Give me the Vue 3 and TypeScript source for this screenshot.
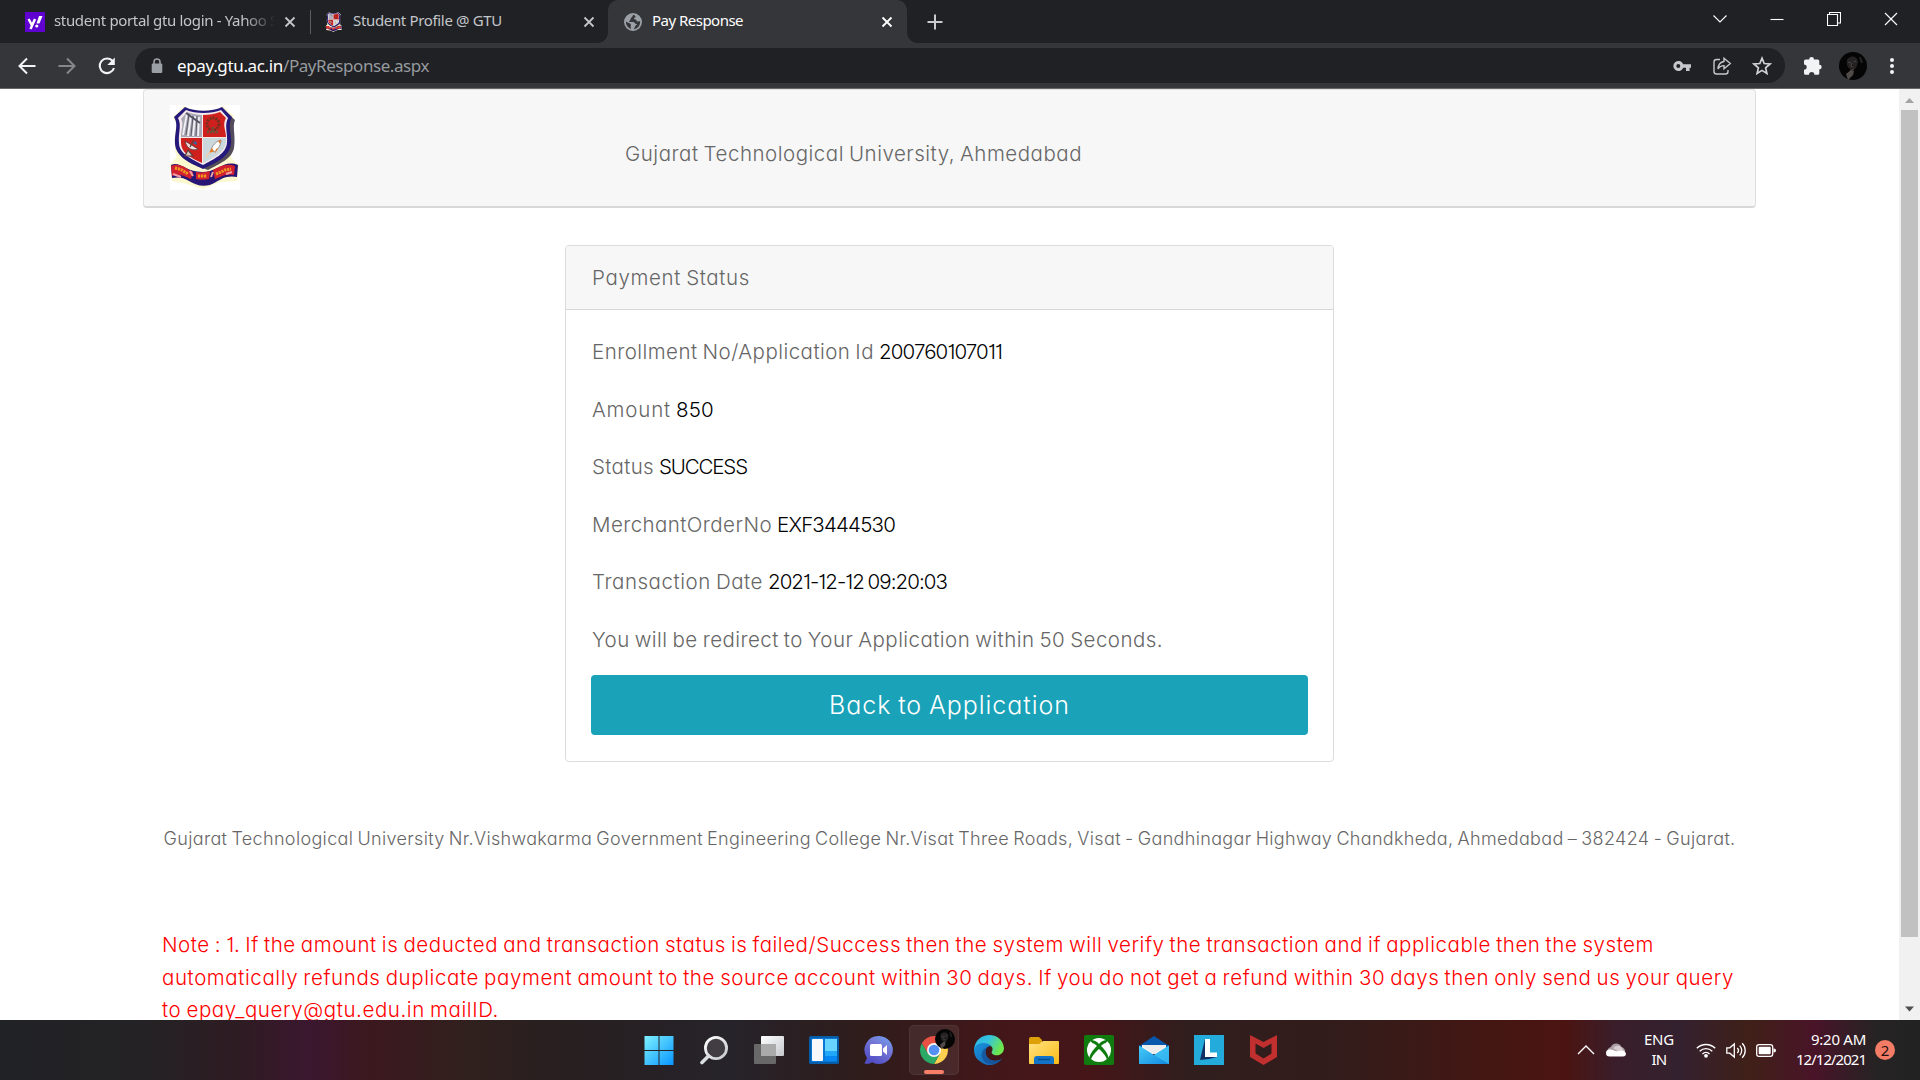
<script setup lang="ts">
interface StatusRow {
  label: string
  value: string
  labelWidth: number
  valueWidth: number
}

interface NoteLine {
  text: string
  width: number
}

const rows: StatusRow[] = [
  { label: 'Enrollment No/Application Id', value: '200760107011', labelWidth: 282, valueWidth: 123 },
  { label: 'Amount', value: '850', labelWidth: 79, valueWidth: 38 },
  { label: 'Status', value: 'SUCCESS', labelWidth: 62, valueWidth: 88 },
  { label: 'MerchantOrderNo', value: 'EXF3444530', labelWidth: 180, valueWidth: 118 },
  { label: 'Transaction Date', value: '2021-12-12 09:20:03', labelWidth: 171, valueWidth: 179 },
]

const notes: NoteLine[] = [
  { text: 'Note : 1. If the amount is deducted and transaction status is failed/Success then the system will verify the transaction and if applicable then the system', width: 1492 },
  { text: 'automatically refunds duplicate payment amount to the source account within 30 days. If you do not get a refund within 30 days then only send us your query', width: 1572 },
  { text: 'to epay_query@gtu.edu.in mailID.', width: 337 },
]

// Tracks a line of text so that it fills the given width.
const vFit = {
  mounted(el: HTMLElement, binding: { value: number }) {
    const count = (el.textContent ?? '').length
    const natural = el.getBoundingClientRect().width
    if (count > 0) el.style.letterSpacing = `${(binding.value - natural) / count}px`
  },
}
</script>

<template>
  <div class="screen">
    <svg class="defs" width="0" height="0">
      <defs>
        <symbol id="crest" viewBox="0 0 70 85">
          <path d="M14 1C24 7 43 7 53 1L64 11C59 20 63 28 62 39L61 53 69 60 67 76 50 77 33 84 17 79 2 76 0 59 7 52C3 42 5 25 7 20L3 12Z" fill="#fbf7cf" />
          <path d="M17 5C28 10 43 9 54 5L65 15C62 22 66 30 64 43 62 54 49 59 38 65 24 60 8 54 7 41 5 29 11 22 6 15Z" fill="#2b2037" opacity=".8" />
          <path d="M15 2C25 7 42 7 52 2L62 12C57 21 62 28 61 39 60 52 45 58 33 64 20 58 6 52 5 39 4 28 9 20 4 12Z" fill="#251a7c" />
          <path d="M16 5C25 9 42 9 51 5L58 13C54 21 58 28 57 38 56 49 44 54 33 60 22 54 9 49 9 38 8 28 12 20 8 13Z" fill="#f6e9ec" />
          <path d="M17 7C22 9 28 10 32 10V32H11C11 24 14 19 11 14Z" fill="#a9a8b5" />
          <path d="M33 10C39 10 45 9 50 7L56 13C52 20 56 25 56 32H33ZM11 33H32V58C20 53 11 47 11 38Z" fill="#cf201e" />
          <path d="M33 33H56C57 46 47 51 33 58Z" fill="#cbd9dd" />
          <path d="M17 8 13 30M21 10 18 31M25 11 23 31M29 12 28 31" stroke="#f1f0f4" stroke-width="1.8" />
          <path d="M19 9 16 30M23 11 21 31M27 11 26 31" stroke="#5c5966" stroke-width="1" />
          <path d="M16 8 30 18" stroke="#535062" stroke-width="2" />
          <circle cx="43" cy="19" r="6" fill="none" stroke="#77301f" stroke-width="3" stroke-dasharray="2 1" />
          <path d="M37 27h12M43 22v6" stroke="#70513c" stroke-width="2.5" stroke-dasharray="2 1" />
          <path d="M15 36C17 45 24 46 28 44Z" fill="#f2dfdc" stroke="#53333b" stroke-width=".8" />
          <path d="M20 42 24 35M18 45 15 51h8z" fill="#dec7bb" stroke="#5f3d3d" stroke-width="1.2" />
          <path d="M23 38l3-2 1 4z" fill="#236fae" />
          <path d="M51 35C46 36 42 41 41 45L44 47C49 44 51 39 51 35Z" fill="#fff" stroke="#7b6562" stroke-width=".7" />
          <path d="M51 35l-3 1 2 3zM42 43l-4 6 6-3M46 44l-1 5 3-6" fill="#e87b24" />
          <path d="M40 47l-4 5" stroke="#f1c9a8" stroke-width="1.5" />
          <path d="M1 60C10 56 16 67 32 67S54 54 68 60L67 72C57 70 51 74 46 77 35 84 26 80 19 76 13 72 8 72 2 73Z" fill="#281576" />
          <path d="M1 61C7 58 14 61 19 65L23 67 21 74C14 71 8 68 2 71ZM26 67C31 68 36 67 40 66L39 74C34 75 30 75 26 74ZM43 65C50 61 57 58 65 61L64 70C57 68 50 72 45 74Z" fill="#d3202e" />
          <path d="M5 63l4 1 3 1 6 4M28 71h9M46 69l5-2 4-2 6-1" fill="none" stroke="#ee9b22" stroke-width="3" stroke-dasharray="2.2 .8" />
          <path d="M3 69l8 3M62 67l-6 2M20 66l3 5M43 67l-2 5" stroke="#f3a0a4" stroke-width="2" />
        </symbol>
        <symbol id="close" viewBox="0 0 12 12">
          <path d="M1.5 1.5 10.5 10.5M10.5 1.5 1.5 10.5" stroke="currentColor" stroke-width="1.8" />
        </symbol>
        <symbol id="face" viewBox="0 0 28 28">
          <circle cx="14" cy="14" r="14" fill="#050505" />
          <path d="M8 8c2-5 10-5 11 2l-2 6-4 2C9 17 7 13 8 8Z" fill="#242222" />
          <path d="M9 10l3 1M15 10l2-1M13 11l-1 3 2 1M11 19l4-2" stroke="#484343" stroke-width="1.2" />
          <path d="M7 22l5-4 3 1-1 4-5 5Z" fill="#504b49" />
          <path d="M21 5l2 6" stroke="#252525" stroke-width="2" />
        </symbol>
        <linearGradient id="win" gradientUnits="userSpaceOnUse" x1="1" y1="1" x2="30" y2="30"><stop stop-color="#7df0ff" /><stop offset="1" stop-color="#0795ff" /></linearGradient>
        <linearGradient id="glass" x1="0" y1="0" x2="1" y2="1"><stop stop-color="#fff" /><stop offset="1" stop-color="#c5c8cc" /></linearGradient>
        <linearGradient id="chat" x1="1" y1="0" x2=".4" y2="1"><stop stop-color="#6daaf5" /><stop offset=".45" stop-color="#7577d5" /><stop offset="1" stop-color="#524fc5" /></linearGradient>
        <linearGradient id="edgeTop" x1="0" y1="0" x2="1" y2=".4"><stop stop-color="#2ab2ea" /><stop offset=".5" stop-color="#35c4dd" /><stop offset="1" stop-color="#6de74b" /></linearGradient>
        <linearGradient id="edgeLow" x1="0" y1="0" x2="1" y2="1"><stop stop-color="#1a93dd" /><stop offset="1" stop-color="#135aa9" /></linearGradient>
        <linearGradient id="folder" x1="0" y1="0" x2="1" y2="1"><stop stop-color="#ffe381" /><stop offset="1" stop-color="#fcbb17" /></linearGradient>
        <linearGradient id="mail" x1="0" y1="0" x2="1" y2="1"><stop stop-color="#45cdf8" /><stop offset="1" stop-color="#1487df" /></linearGradient>
      </defs>
    </svg>

    <header class="tabs">
      <div class="tab first">
        <svg class="fav" viewBox="0 0 20 20">
          <rect width="20" height="20" fill="#5f01d1" />
          <path d="M3.6 7 6.8 13M10 7 5.5 17" stroke="#fff" stroke-width="2.5" />
          <path d="M14 4h3.5L14.5 11.5h-3Z" fill="#fff" /><circle cx="11.8" cy="14" r="1.6" fill="#fff" />
        </svg>
        <div class="title fade"><span v-fit="224">student portal gtu login - Yahoo S</span></div>
        <svg class="x"><use href="#close" /></svg>
      </div>
      <div class="tab second">
        <svg class="fav"><use href="#crest" /></svg>
        <div class="title"><span v-fit="149">Student Profile @ GTU</span></div>
        <svg class="x"><use href="#close" /></svg>
      </div>
      <div class="tab active">
        <svg class="globe" viewBox="0 0 18 18">
          <circle cx="9" cy="9" r="9" fill="#9aa0a6" />
          <path d="M9.5 1.8C7.8 3 8.8 4.2 7.5 4.6 6 5.1 7.4 6.4 6.1 6.9L5 9H9c2 0 1.8 2 3.2 2 1.2 0 1 .9-.2 1.3-1.3.4-1 3-2.4 4A7.2 7.2 0 0 0 16.2 8.5C14.5 8 14.9 9 13.2 8.3 12 7.7 12.4 6.2 10.8 6.2 9.3 6.1 9.9 4.9 11 4.5 12.1 4 11.7 2.5 9.5 1.8ZM1.9 8.5C3.2 10 5.4 9.5 6.6 11 7.7 12.5 5.9 13 7.3 16A7.2 7.2 0 0 1 1.9 8.5Z" fill="#35363a" />
        </svg>
        <div class="title"><span v-fit="91">Pay Response</span></div>
        <svg class="x"><use href="#close" /></svg>
      </div>
      <svg class="plus" viewBox="0 0 16 16"><path d="M8 .5v15M.5 8h15" stroke="#c8cbcf" stroke-width="2" /></svg>
      <div class="controls">
        <svg viewBox="0 0 14 14"><path d="M.5 3.5 7 10 13.5 3.5" /></svg>
        <svg viewBox="0 0 14 14"><path d="M.5 7.5h13" /></svg>
        <svg viewBox="0 0 14 14"><path d="M.5 2.5h10v11h-10ZM2.5 2.5v-2h11v10.5h-3" /></svg>
        <svg viewBox="0 0 14 14"><path d="M1 1 13 13M13 1 1 13" /></svg>
      </div>
    </header>

    <nav class="toolbar">
      <svg class="nav" viewBox="0 0 20 20"><path d="M18.5 10H3M10 2.5 2.5 10 10 17.5" stroke="#f1f3f4" stroke-width="2" fill="none" /></svg>
      <svg class="nav" viewBox="0 0 20 20"><path d="M1.5 10H17M10 2.5 17.5 10 10 17.5" stroke="#85878b" stroke-width="2" fill="none" /></svg>
      <svg class="nav" viewBox="0 0 20 20"><path d="M15.7 5.2A7.3 7.3 0 1 0 17 12" stroke="#f1f3f4" stroke-width="2.1" fill="none" /><path d="M17.8 1.5V9H10.3Z" fill="#f1f3f4" /></svg>
      <div class="omnibox">
        <svg class="lock" viewBox="0 0 12 16"><path d="M3 7V4a3 3 0 0 1 6 0v3" fill="none" stroke="#9aa0a6" stroke-width="1.6" /><rect x=".7" y="5.5" width="10.6" height="9.5" rx="1.2" fill="#9aa0a6" /></svg>
        <div class="url"><span v-fit="106" class="host">epay.gtu.ac.in</span><span v-fit="146">/PayResponse.aspx</span></div>
        <svg class="key" viewBox="0 0 20 20"><path d="M11.2 8.2A5.1 5.1 0 1 0 11.2 11.8H14V15h3.6v-3.2H19V8.2ZM6.3 12a2 2 0 1 1 0-4 2 2 0 0 1 0 4Z" fill="#c4c7cb" fill-rule="evenodd" /></svg>
        <svg class="share" viewBox="0 0 20 20"><path d="M8 3.5H4.5A2.5 2.5 0 0 0 2 6v9.5A2.5 2.5 0 0 0 4.5 18h9a2.5 2.5 0 0 0 2.5-2.5V14" /><path d="M12 2.2 18.3 7.5 12 12.8V9.6C9.5 9.6 7.5 10.5 6 13 6.3 8.5 8.5 6 12 5.5Z" /></svg>
        <svg class="star" viewBox="0 0 20 20"><path d="M10 2.2 12.2 7.5 18 8 13.6 11.8 14.9 17.4 10 14.4 5.1 17.4 6.4 11.8 2 8 7.8 7.5Z" fill="none" stroke="#d0d2d5" stroke-width="1.7" /></svg>
      </div>
      <svg class="puzzle" viewBox="0 0 20 20"><path d="M1 5a1.6 1.6 0 0 1 1.6-1.6H6.2a2.4 2.4 0 1 1 4.8 0h3.7A1.6 1.6 0 0 1 16.3 5v3.7a2.4 2.4 0 1 1 0 4.8v3.7a1.6 1.6 0 0 1-1.6 1.6h-3.3a2.7 2.7 0 0 0-5.4 0H2.6A1.6 1.6 0 0 1 1 17.2v-3.4a2.7 2.7 0 0 0 0-5.4Z" fill="#f1f3f4" /></svg>
      <svg class="avatar"><use href="#face" /></svg>
      <svg class="menu" viewBox="0 0 6 18"><circle cx="3" cy="3" r="2" /><circle cx="3" cy="9" r="2" /><circle cx="3" cy="15" r="2" /></svg>
    </nav>

    <div class="viewport">
      <main class="page">
        <section class="banner">
          <svg class="crest"><rect width="70" height="85" fill="#fff" /><use href="#crest" width="70" height="85" /></svg>
          <div class="name"><span v-fit="457">Gujarat Technological University, Ahmedabad</span></div>
        </section>
        <section class="card">
          <div class="card-head"><span v-fit="158">Payment Status</span></div>
          <div class="card-body">
            <div v-for="row in rows" :key="row.label" class="row">
              <span v-fit="row.labelWidth">{{ row.label }}</span>
              <span v-fit="row.valueWidth" class="value">{{ row.value }}</span>
            </div>
            <div class="row"><span v-fit="571">You will be redirect to Your Application within 50 Seconds.</span></div>
            <button class="back" type="button"><span v-fit="241">Back to Application</span></button>
          </div>
        </section>
        <p class="address"><span v-fit="1572">Gujarat Technological University Nr.Vishwakarma Government Engineering College Nr.Visat Three Roads, Visat - Gandhinagar Highway Chandkheda, Ahmedabad – 382424 - Gujarat.</span></p>
        <div class="notes">
          <div v-for="line in notes" :key="line.text"><span v-fit="line.width">{{ line.text }}</span></div>
        </div>
      </main>
      <aside class="scrollbar">
        <svg viewBox="0 0 21 21"><path d="M6 14 10.5 9 15 14Z" fill="#a3a3a3" /></svg>
        <div class="thumb"></div>
        <svg viewBox="0 0 21 21"><path d="M6 7.5h9L10.5 12.5Z" fill="#505050" /></svg>
      </aside>
    </div>

    <footer class="taskbar">
      <div class="apps">
        <div class="app"><svg viewBox="0 0 30 30"><path d="M.5 1h14v14h-14ZM15.5 1h14v14h-14ZM.5 16h14v14h-14ZM15.5 16h14v14h-14Z" fill="url(#win)" /></svg></div>
        <div class="app"><svg viewBox="0 0 30 30"><circle cx="17" cy="13" r="10.6" fill="#fff" fill-opacity=".12" stroke="url(#glass)" stroke-width="2.8" /><path d="M9.5 21 3 27.5" stroke="#dcdfe2" stroke-width="3.6" stroke-linecap="round" /></svg></div>
        <div class="app"><svg viewBox="0 0 30 30"><rect x="7" y="1" width="23" height="20" rx="1" fill="url(#glass)" /><rect y="9" width="22" height="20" rx="1" fill="#686868" /><path d="M7 9h15v12H7Z" fill="#aaa" /></svg></div>
        <div class="app"><svg viewBox="0 0 30 30"><rect y="1" width="30" height="28" rx="1.5" fill="#075ca8" /><rect x="2" y="3" width="26" height="24" fill="#0878d4" /><rect x="3" y="4" width="11" height="22" rx="1" fill="#f8f8fa" /><path d="M16 4h12v12H16Z" fill="#67d5ff" /><path d="M16 16h12v5H16Z" fill="#20a7fa" /><path d="M16 21h12v5H16Z" fill="#0787f2" /></svg></div>
        <div class="app"><svg viewBox="0 0 30 30"><path d="M15 1A14 14 0 1 1 8 27.2C6 29 3 29 .5 28.6L3 23A14 14 0 0 1 15 1Z" fill="url(#chat)" /><rect x="6" y="9" width="12" height="12" rx="1.5" fill="#fff" /><path d="M19 13.5 23 10v10l-4-3.5Z" fill="#fff" /></svg></div>
        <div class="app running">
          <svg viewBox="0 0 30 30"><path d="M15 8H27.12A14 14 0 0 1 15 29L21 18.5Z" fill="#ffcd42" /><path d="M2.88 8 9 18.5 15 22 21 18.5 15 29A14 14 0 0 1 2.88 8Z" fill="#1aa35c" /><path d="M15 8H27.1A14 14 0 0 0 2.88 8L9 18.5Z" fill="#e74435" /><circle cx="15" cy="15" r="7" fill="#f6f7f8" /><circle cx="15" cy="15" r="5.3" fill="#4688f1" /></svg>
          <svg class="mini"><use href="#face" /></svg>
          <i class="indicator"></i>
        </div>
        <div class="app"><svg viewBox="0 0 30 30"><path d="M0 15C1-4 28-5 30 13c0 7-8 9-11.5 6C16 16.5 20 16 18 12 13 7 3 8 0 15Z" fill="url(#edgeTop)" /><path d="M0 14C2 7 13 6 17.5 11 12 10 9 18 14 23c3 3 9 4 14 .5C23 31 13 32 7 27 2 24 0 20 0 14Z" fill="url(#edgeLow)" /><path d="M17.5 11C12 10 9 18 14 23c3 3 9 4 14 .5C24 29 18 30 13 28 5 24 6 12 17.5 11Z" fill="#174f96" opacity=".75" /></svg></div>
        <div class="app"><svg viewBox="0 0 30 30"><path d="M0 4Q0 2 2 2H10l3 3v7H0Z" fill="#dda009" /><path d="M0 9h10l4-3H29q1 0 1 1v21q0 1-1 1H1q-1 0-1-1Z" fill="url(#folder)" /><path d="M5 29v-5q0-3 3-3h14q3 0 3 3v5Z" fill="#1273c8" /><path d="M9 24.5h12" stroke="#064a89" stroke-width="1.3" /></svg></div>
        <div class="app"><svg viewBox="0 0 30 30"><rect width="30" height="30" rx="2" fill="#107c10" /><circle cx="15" cy="15" r="12" fill="#fff" /><path d="M6 5.5C9 4 13 7 15 9c2-2 6-5 9-3.5L21.5 8.2C20 8 18.5 9.6 17 11c4.5 4 7.5 9 7.5 12L23 24.5C22 21 18 16.5 15 14c-3 2.5-7 7-8 10.5L5.5 23c0-3 3-8 7.5-12C11.5 9.6 10 8 8.5 8.2Z" fill="#107c10" /></svg></div>
        <div class="app"><svg viewBox="0 0 30 30"><path d="M0 11 15 1 30 11V18H0Z" fill="#0758ac" /><path d="M3 10h24v9H3Z" fill="#f3f3f4" /><path d="M0 10.5 15 20 30 10.5V29H0Z" fill="url(#mail)" /><path d="M15 20 30 29V10.5Z" fill="#45cbf7" opacity=".6" /><path d="M3 10 15 19 27 10Z" fill="#ececec" /></svg></div>
        <div class="app"><svg viewBox="0 0 30 30"><rect width="30" height="30" fill="#23abdb" /><path d="M11 4 6 25 15 24 23 22 16 18Z" fill="#102f63" /><path d="M11 4h5v13.5h7V22H11Z" fill="#fff" /></svg></div>
        <div class="app"><svg viewBox="0 0 30 30"><path d="M1 0 14.5 7 28 0V22L14.5 30 1 22ZM6.5 8.5V18.5L14.5 23.5 22.5 18.5V8.5L14.5 13Z" fill="#c12f2f" fill-rule="evenodd" /></svg></div>
      </div>
      <div class="tray">
        <svg class="up" viewBox="0 0 18 12"><path d="M1 10 9 2 17 10" fill="none" stroke="#fff" stroke-width="1.4" /></svg>
        <svg class="cloud" viewBox="0 0 20 14"><path d="M3 11A4 4 0 0 1 4.8 4 5.8 5.8 0 0 1 15.5 4 4.8 4.8 0 0 1 19 10Z" fill="#a99ca2" /><path d="M7 5a6 6 0 0 1 8.5-.8L19 10H14Z" fill="#d7cdd0" /><path d="M3.5 13.5a3.5 3.5 0 0 1 0-7C8 6 9 9 12 8c3-1 7-1 8 2.5a3 3 0 0 1-3 3Z" fill="#fff" /></svg>
        <div class="lang"><span v-fit="30">ENG</span><span v-fit="15">IN</span></div>
        <svg class="wifi" viewBox="0 0 20 16"><path d="M.8 6.3a13 13 0 0 1 18.4 0M3.7 9.2a9 9 0 0 1 12.6 0M6.5 12a5 5 0 0 1 7 0" fill="none" stroke="#fff" stroke-width="1.4" /><circle cx="10" cy="13.8" r="1.9" fill="#fff" /></svg>
        <svg class="sound" viewBox="0 0 20 17"><path d="M.8 5.8v5.4h3L8.3 15V2L3.8 5.8ZM11.3 6a3.6 3.6 0 0 1 0 5M13.7 3.6a7 7 0 0 1 0 9.8M16.2 1.2a10.4 10.4 0 0 1 0 14.6" fill="none" stroke="#fff" stroke-width="1.3" /></svg>
        <svg class="battery" viewBox="0 0 20 13"><rect x=".7" y=".7" width="16" height="11.6" rx="2.4" fill="none" stroke="#fff" stroke-width="1.3" /><rect x="2.7" y="2.7" width="12" height="7.6" rx="1" fill="#fff" /><path d="M17.5 4.5q2.5-.2 2.5 2t-2.5 2Z" fill="#fff" /></svg>
        <div class="clock"><span v-fit="55">9:20 AM</span><span v-fit="70">12/12/2021</span></div>
        <div class="badge">2</div>
      </div>
    </footer>
  </div>
</template>

<style>
body {
  margin: 0;
  overflow: hidden;
}
</style>

<style scoped>
.screen {
  width: 1920px;
  height: 1080px;
  display: flex;
  flex-direction: column;
  overflow: hidden;
  background: #fff;
  font-family: "Noto Sans", "Open Sans", sans-serif;
  white-space: nowrap;
}
.screen * {
  box-sizing: border-box;
}
svg {
  display: block;
  flex: none;
}
.defs {
  position: absolute;
}
.tabs {
  height: 43px;
  flex: none;
  display: flex;
  align-items: center;
  background: #202124;
  color: #c3c6ca;
  font-size: 15px;
}
.tab {
  height: 43px;
  display: flex;
  align-items: center;
  position: relative;
}
.first {
  width: 310px;
  padding-left: 25px;
}
.second {
  width: 298px;
  padding-left: 14px;
}
.first::after {
  content: "";
  position: absolute;
  right: -1px;
  top: 10px;
  width: 1px;
  height: 24px;
  background: #5b5d61;
}
.active {
  width: 299px;
  padding-left: 16px;
  background: #35363a;
  border-radius: 10px 10px 0 0;
  color: #fff;
}
.active::before,
.active::after {
  content: "";
  position: absolute;
  bottom: 0;
  width: 10px;
  height: 10px;
}
.active::before {
  left: -10px;
  background: radial-gradient(circle at 0 0, transparent 9.5px, #35363a 10px);
}
.active::after {
  right: -10px;
  background: radial-gradient(circle at 100% 0, transparent 9.5px, #35363a 10px);
}
.fav {
  width: 20px;
  height: 20px;
  margin-right: 9px;
}
.globe {
  width: 18px;
  height: 18px;
  margin-right: 10px;
}
.title {
  line-height: 40px;
  height: 43px;
}
.first .title {
  width: 221px;
  overflow: hidden;
}
.second .title {
  width: 228px;
}
.active .title {
  width: 229px;
}
.fade {
  mask-image: linear-gradient(to right, #000 190px, transparent 221px);
}
.x {
  width: 12px;
  height: 12px;
  margin-left: 9px;
}
.second .x {
  margin-left: 2px;
}
.active .x {
  margin-left: 0;
}
.plus {
  width: 16px;
  height: 16px;
  margin-left: 20px;
}
.controls {
  margin-left: auto;
  display: flex;
  gap: 43px;
  padding: 0 22px 6px 0;
}
.controls svg {
  width: 14px;
  height: 14px;
  fill: none;
  stroke: #fff;
  stroke-width: 1.1;
}
.toolbar {
  height: 46px;
  flex: none;
  display: flex;
  align-items: center;
  background: #35363a;
  border-bottom: 1px solid #66676a;
  padding-left: 17px;
}
.nav {
  width: 20px;
  height: 20px;
  margin-right: 20px;
}
.omnibox {
  width: 1650px;
  height: 35px;
  border-radius: 18px;
  background: #202124;
  display: flex;
  align-items: center;
  padding: 0 13px 0 16px;
  margin-left: -2px;
}
.lock {
  width: 12px;
  height: 16px;
  margin-right: 14px;
}
.url {
  font-size: 17px;
  line-height: 33px;
  color: #969a9f;
  flex: 1;
}
.host {
  color: #fff;
}
.key,
.share,
.star {
  width: 20px;
  height: 20px;
  margin-left: 20px;
}
.share {
  fill: none;
  stroke: #c4c7cb;
  stroke-width: 1.4;
}
.puzzle {
  width: 20px;
  height: 20px;
  margin-left: 18px;
}
.avatar {
  width: 28px;
  height: 28px;
  margin-left: 16px;
}
.menu {
  width: 6px;
  height: 18px;
  margin-left: 22px;
  fill: #f1f3f4;
}
.viewport {
  height: 931px;
  flex: none;
  display: flex;
  overflow: hidden;
}
.page {
  width: 1899px;
  display: flex;
  flex-direction: column;
  align-items: center;
  font-family: Inter, "Liberation Sans", sans-serif;
  font-weight: 350;
  font-size: 20.5px;
  font-feature-settings: "cv11", "cv01", "calt" 0;
  word-spacing: -1.2px;
  color: #666;
}
.banner {
  width: 1613px;
  height: 119px;
  flex: none;
  display: flex;
  align-items: flex-start;
  background: #f7f7f7;
  border: 1px solid #dfdfdf;
  border-bottom: 2px solid #d8d8d8;
  border-radius: 4px;
  padding: 15px 0 0 26px;
}
.crest {
  width: 70px;
  height: 85px;
  margin-right: 385px;
}
.name {
  line-height: 30px;
  margin-top: 34px;
}
.card {
  width: 769px;
  height: 517px;
  flex: none;
  margin-top: 37px;
  border: 1px solid #dcdcdc;
  border-radius: 4px;
}
.card-head {
  height: 64px;
  line-height: 64px;
  padding-left: 26px;
  background: #f7f7f7;
  border-bottom: 1px solid #d8d8d8;
  border-radius: 3px 3px 0 0;
}
.card-body {
  padding: 13px 25px 0;
}
.row {
  height: 57.6px;
  line-height: 57.6px;
  display: flex;
  gap: 5px;
  padding-left: 1px;
}
.value {
  color: #000;
}
.back {
  display: block;
  width: 717px;
  height: 60px;
  margin-top: 6px;
  padding: 1px 0 0;
  border: 0;
  border-radius: 4px;
  background: #19a2b8;
  color: #fff;
  font: inherit;
  font-feature-settings: inherit;
  word-spacing: inherit;
  font-size: 25px;
  line-height: 59px;
}
.address {
  margin: 62px 0 0;
  font-size: 18px;
  line-height: 30px;
}
.notes {
  width: 1575px;
  margin-top: 75px;
  line-height: 32.5px;
  color: #f00;
}
.scrollbar {
  width: 21px;
  background: #f1f1f1;
  display: flex;
  flex-direction: column;
  align-items: center;
}
.scrollbar svg {
  width: 21px;
  height: 21px;
}
.thumb {
  width: 17px;
  height: 827px;
  margin-bottom: auto;
  background: #c1c1c1;
}
.taskbar {
  height: 60px;
  flex: none;
  display: flex;
  justify-content: space-between;
  padding-left: 631px;
  color: #fff;
  background: linear-gradient(90deg, #212226 0, #242224 150px, #301b23 250px, #3b1730 310px, #3c181e 370px, #30201e 470px, #281f20 560px, #26232a 730px, #301c1b 870px, #43171a 1000px, #451518 1090px, #301e1e 1190px, #331c1a 1350px, #431713 1480px, #4b1411 1565px, #3a1e2a 1615px, #34212f 1680px, #402018 1750px, #491428 1815px, #262324 1875px, #222 1920px);
}
.apps {
  display: flex;
}
.app {
  width: 55px;
  height: 60px;
  display: flex;
  align-items: center;
  justify-content: center;
  position: relative;
}
.app > svg {
  width: 30px;
  height: 30px;
}
.running::before {
  content: "";
  position: absolute;
  inset: 5px 2px 5px 3px;
  border-radius: 5px;
  background: rgba(255, 255, 255, 0.07);
  border: 1px solid rgba(255, 255, 255, 0.06);
}
.app > .mini {
  position: absolute;
  width: 20px;
  height: 20px;
  left: 29px;
  top: 9px;
}
.indicator {
  position: absolute;
  left: 18px;
  bottom: 6px;
  width: 20px;
  height: 4px;
  border-radius: 2px;
  background: #f77f68;
}
.tray {
  display: flex;
  align-items: center;
  padding-right: 25px;
  font-size: 15px;
}
.up {
  width: 18px;
  height: 12px;
  margin-right: 11px;
}
.cloud {
  width: 20px;
  height: 14px;
  margin-right: 18px;
}
.lang,
.clock {
  display: flex;
  flex-direction: column;
  line-height: 20px;
  margin-top: -2px;
}
.lang {
  width: 30px;
  align-items: center;
  margin-right: 22px;
}
.wifi {
  width: 20px;
  height: 16px;
  margin-right: 10px;
}
.sound {
  width: 20px;
  height: 17px;
  margin-right: 10px;
}
.battery {
  width: 20px;
  height: 13px;
  margin-right: 20px;
}
.clock {
  width: 70px;
  align-items: flex-end;
  margin-right: 9px;
}
.badge {
  width: 20px;
  height: 20px;
  border-radius: 50%;
  background: #f37c66;
  color: #26110e;
  text-align: center;
  font-size: 15px;
  line-height: 20px;
}
</style>
